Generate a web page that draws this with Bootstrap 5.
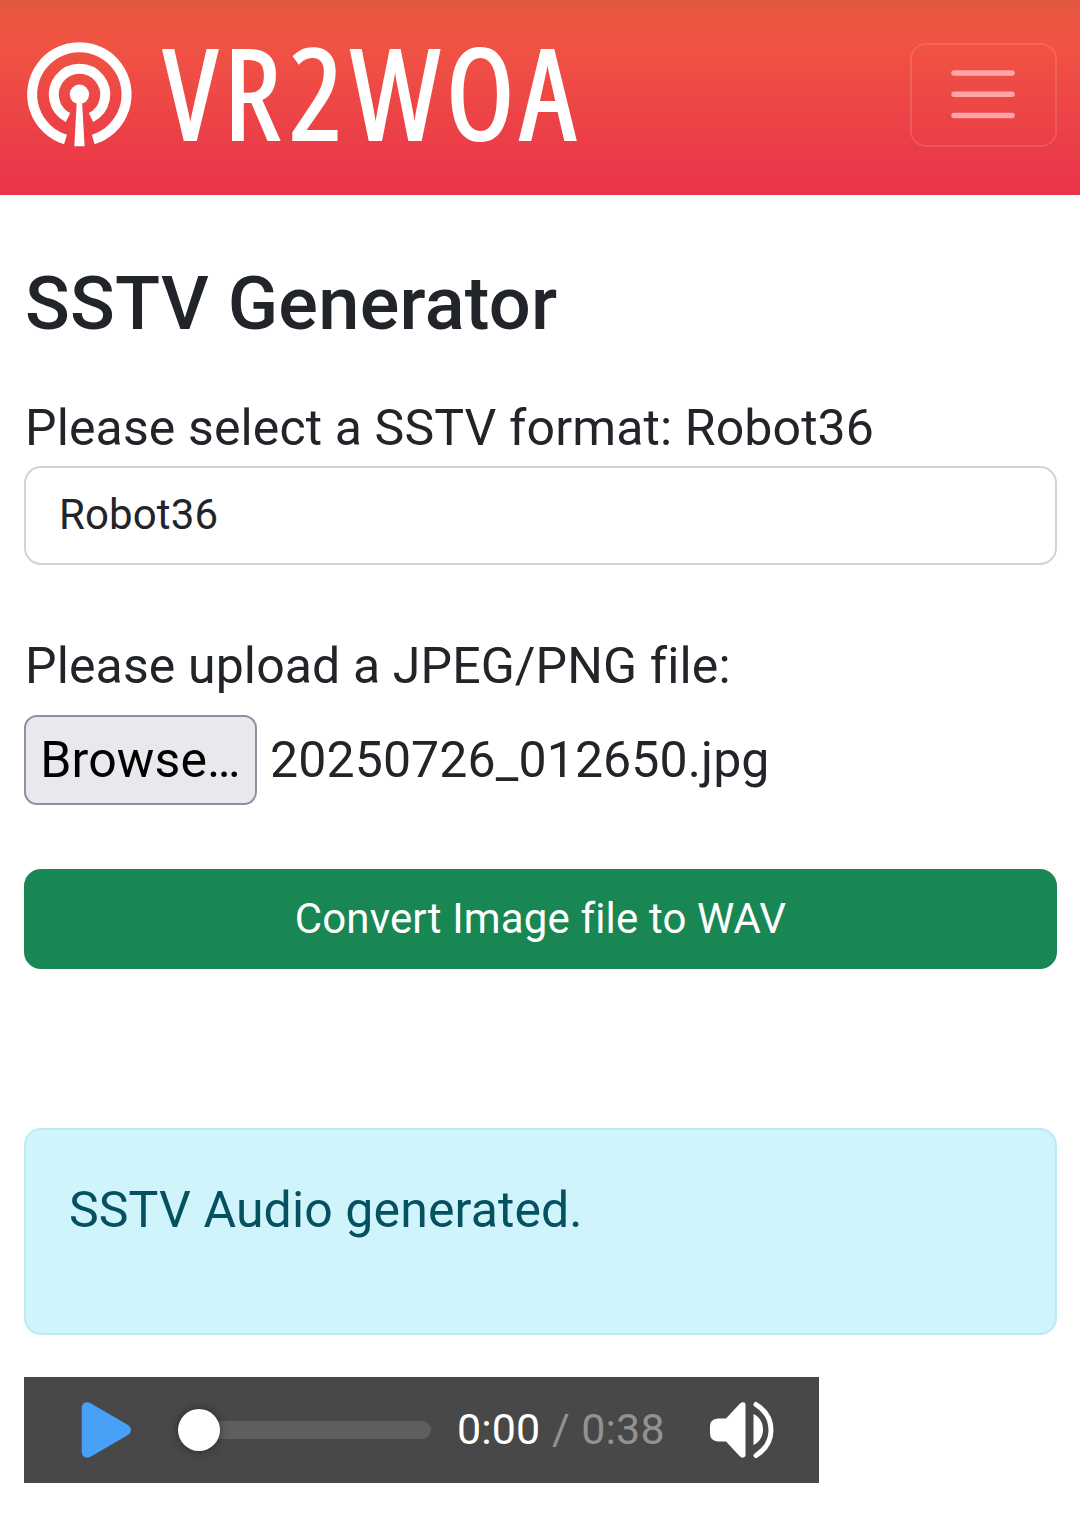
<!DOCTYPE html>
<html lang="en">
<head>
<meta charset="utf-8">
<meta name="viewport" content="width=device-width, initial-scale=1">
<title>VR2WOA - SSTV Generator</title>
<link rel="stylesheet" href="https://cdn.jsdelivr.net/npm/bootstrap@5.3.0/dist/css/bootstrap.min.css">
<style>
body{font-family:Roboto,"Liberation Sans",sans-serif;font-size:50px;line-height:72px;letter-spacing:.12px;color:#212529}
.site-nav{height:195px;padding:0 23px 5px 26px;background:linear-gradient(#e0583f 0,#ec5640 18px,#f05443 40px,#e9334a 100%)}
.logo{display:block;width:560px;height:112px;overflow:visible}
.site-nav .navbar-toggler{width:147px;height:104px;border:2px solid rgba(255,255,255,.12);border-radius:16px;padding:0}
.site-nav .navbar-toggler svg{display:block;margin:-2px auto 0 38px}
.page-body{padding:0 23px 0 24px}
h1{font-size:74px;line-height:88px;font-weight:500;letter-spacing:.25px;margin:65px 0 44px;padding-left:1px}
.field-label{display:block;padding-left:1px;white-space:nowrap}
.format-select{height:99px;border:2px solid #ced4d8;border-radius:17px;padding:0 33px;margin:2px 0 65px;font-size:42px;line-height:93px;background:#fff none}
.file-row{margin-top:13px}
.browse{width:233px;height:90px;border:2px solid #8f8f9d;border-radius:13px;background:#e9e9ed;color:#000;padding:0;line-height:84px;font-size:inherit;white-space:nowrap;letter-spacing:inherit}
.file-name{margin-left:13px}
.convert{height:100px;border-radius:17px;font-size:42px;line-height:96px;padding:0;border-width:2px;margin-top:64px;letter-spacing:.15px}
.notice{height:207px;border-width:2px;border-radius:17px;padding:44px 43px;margin:159px 0 42px;color:#055160;background:#cff4fc;border-color:#bdebf2}
.player{width:795px;height:106px;background:#484848;font-size:43px;line-height:50px}
.player-time{padding-left:26px;padding-bottom:2px;gap:11.5px}
.player-play{margin-left:57px}
.player-track{width:232px;height:18px;border-radius:9px;background:#5e5e5e;margin-left:66px}
.player-thumb{width:42px;height:42px;border-radius:50%;background:#fff;box-shadow:0 0 10px rgba(0,0,0,.45);margin-left:-21px}
.player-volume{margin-left:44px}
.duration{color:#929292}
</style>
</head>
<body>
<nav class="navbar site-nav d-flex flex-nowrap align-items-center justify-content-between">
<a class="navbar-brand p-0 m-0" href="#" aria-label="VR2WOA"><svg class="logo" viewBox="26 39 560 112">
<g fill="none" stroke="#fff" stroke-width="10">
<path d="M65.500 139.500A47.200 47.200 0 1 1 93.200 139.500"/>
<path d="M68 117.500A25.700 25.700 0 1 1 91 117.500"/>
</g>
<circle cx="79.400" cy="94.300" r="9.700" fill="#fff"/>
<path fill="#fff" d="M76.800 101h5.200l2.600 45.300H74.300z"/>
<text y="140" x="163.300 223.700 289 350.500 446 520" font-family="Open Sans" font-stretch="77%" font-weight="510" font-size="125.500" letter-spacing="0" fill="#fff" stroke="#fff" stroke-width="2">VR2WOA</text>
</svg></a>
<button class="navbar-toggler" type="button" aria-label="Menu"><svg width="66" height="52" viewBox="0 0 66 52"><path d="M4 5h58M4 26.300h58M4 47.500h58" stroke="#ffa5a8" stroke-width="5.500" stroke-linecap="round"/></svg></button>
</nav>
<main class="page-body">
<h1>SSTV Generator</h1>
<div class="field-label">Please select a SSTV format: Robot36</div>
<div class="form-select format-select">Robot36</div>
<div class="field-label">Please upload a JPEG/PNG file:</div>
<div class="d-flex align-items-center file-row"><button class="browse" type="button">Browse…</button><span class="file-name">20250726_012650.jpg</span></div>
<button class="btn btn-success convert w-100 d-block">Convert Image file to WAV</button>
<div class="alert notice">SSTV Audio generated.</div>
<div class="player d-flex align-items-center">
<svg class="player-play" width="52" height="58" viewBox="0 0 52 58"><path d="M.7 7.500C.7 1.500 6 0 10 2.500L47 24Q53 29 47 34L10 55.500C6 58 .7 56.500 .7 50.500Z" fill="#48a0f7"/></svg>
<div class="player-track d-flex align-items-center"><div class="player-thumb"></div></div>
<div class="player-time d-flex"><span class="text-white">0:00</span><span class="duration">/</span><span class="duration">0:38</span></div>
<svg class="player-volume" width="66" height="58" viewBox="0 0 66 58" fill="#fff"><path d="M9 17.500H17L31 2.500Q34 0 36.500 2.500V55Q34 58 31 55.500L17 40.500H9Q1 40 1 32V25Q1 18 9 17.500ZM44.500 13C51 16 54 22 54 28.500S51 41 44.500 44Z"/><path d="M47 3.500C67 16 67 42 47 54.500" fill="none" stroke="#fff" stroke-width="5" stroke-linecap="round"/></svg>
</div>
</main>
<script src="https://cdn.jsdelivr.net/npm/bootstrap@5.3.0/dist/js/bootstrap.bundle.min.js"></script>
</body>
</html>
